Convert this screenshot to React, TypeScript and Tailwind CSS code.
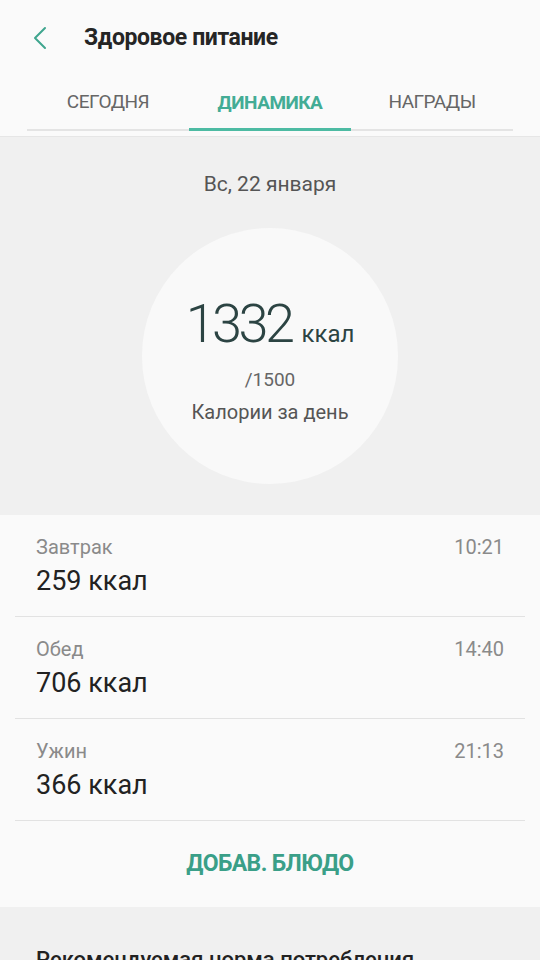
import { FC } from 'react';

const font = { fontFamily: 'Roboto, "Noto Sans", sans-serif' };

const meals = [
  { name: 'Завтрак', kcal: '259 ккал', time: '10:21' },
  { name: 'Обед', kcal: '706 ккал', time: '14:40' },
  { name: 'Ужин', kcal: '366 ккал', time: '21:13' },
];

const tabs = ['СЕГОДНЯ', 'ДИНАМИКА', 'НАГРАДЫ'];

const App: FC = () => {
  return (
    <div className="h-[960px] w-[540px] overflow-hidden bg-[#f0f0f0]" style={font}>
      {/* header */}
      <div className="border-b border-[#e6e6e6] bg-[#fafafa] pb-[5px]">
        <div className="flex h-[76px] items-center">
          <svg className="ml-[32px] h-[24px] w-[16px]" viewBox="0 0 16 24" fill="none">
            <path d="M13 2 3 12l10 10" stroke="#3fa58e" strokeWidth="2" strokeLinecap="round" strokeLinejoin="round" />
          </svg>
          <h1 className="ml-[36px] text-[23px] font-bold tracking-[-0.4px] text-[#252525]">
            Здоровое питание
          </h1>
        </div>
        <div className="mx-[27px] flex border-b-2 border-[#e4e4e4]">
          {tabs.map((t, i) => (
            <div
              key={t}
              className={
                i === 1
                  ? 'relative -mb-[2px] flex h-[55px] flex-1 items-center justify-center border-b-[3px] border-[#4dbba3] pt-[2px] text-[19px] font-bold tracking-[-0.5px] text-[#43ac95]'
                  : 'flex h-[53px] flex-1 items-center justify-center text-[19px] tracking-[-0.5px] text-[#666]'
              }
            >
              {t}
            </div>
          ))}
        </div>
      </div>

      {/* summary */}
      <div className="flex flex-col items-center pb-[31px] pt-[35px]">
        <div className="text-[21px] leading-[24px] text-[#555]">Вс, 22 января</div>
        <div className="mt-[32px] flex h-[256px] w-[256px] flex-col items-center rounded-full bg-[#f9f9f9]">
          <div className="mt-[64px] flex items-baseline">
            <span className="text-[54px] font-light leading-[64px] tracking-[-3.5px] text-[#2c4443]">1332</span>
            <span className="ml-[10px] text-[24px] text-[#2c4443]">ккал</span>
          </div>
          <div className="mt-[12px] text-[19px] leading-[24px] text-[#666]">/1500</div>
          <div className="mt-[8px] text-[20px] leading-[24px] text-[#555]">Калории за день</div>
        </div>
      </div>

      {/* meals */}
      <div className="bg-[#fafafa]">
        {meals.map((m) => (
          <div key={m.name} className="mx-[15px] border-b border-[#e2e2e2]">
            <div className="flex h-[101px] flex-col px-[21px] pt-[20px]">
              <div className="flex items-center justify-between text-[20px] leading-[24px] text-[#8a8a8a]">
                <span>{m.name}</span>
                <span>{m.time}</span>
              </div>
              <div className="mt-[6px] text-[27px] leading-[32px] text-[#222]">{m.kcal}</div>
            </div>
          </div>
        ))}
        <div className="flex h-[86px] items-center justify-center text-[23px] font-bold tracking-[-0.6px] text-[#3a9f88]">
          ДОБАВ. БЛЮДО
        </div>
      </div>

      {/* recommendation */}
      <div className="px-[36px] pt-[36px] text-[22px] font-medium text-[#222]">
        Рекомендуемая норма потребления
      </div>
    </div>
  );
};

export default App;
